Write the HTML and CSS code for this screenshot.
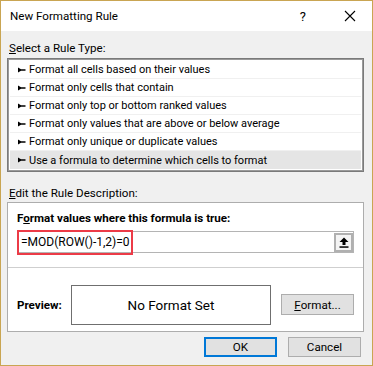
FILE: index.html
```html
<!DOCTYPE html>
<html>
<head>
<meta charset="utf-8">
<link rel="stylesheet" href="styles.css">
</head>
<body>
<div class="window">
  <div class="titlebar">
    <span class="title">New Formatting Rule</span>
    <span class="help">?</span>
    <svg class="close" width="12" height="12" viewBox="0 0 12 12"><path d="M1 1 L11 11 M11 1 L1 11" stroke="#000" stroke-width="1.1" fill="none"/></svg>
  </div>
  <div class="content">
    <div class="label label-top"><u>S</u>elect a Rule Type:</div>
    <div class="list">
      <div class="row"><svg class="arr" width="8" height="6" viewBox="0 0 8 6"><path d="M0 0.5 L3 2.3 L7.5 2.3 L7.5 3.7 L3 3.7 L0 5.5 Z" fill="#000"/></svg>Format all cells based on their values</div>
      <div class="row"><svg class="arr" width="8" height="6" viewBox="0 0 8 6"><path d="M0 0.5 L3 2.3 L7.5 2.3 L7.5 3.7 L3 3.7 L0 5.5 Z" fill="#000"/></svg>Format only cells that contain</div>
      <div class="row"><svg class="arr" width="8" height="6" viewBox="0 0 8 6"><path d="M0 0.5 L3 2.3 L7.5 2.3 L7.5 3.7 L3 3.7 L0 5.5 Z" fill="#000"/></svg>Format only top or bottom ranked values</div>
      <div class="row"><svg class="arr" width="8" height="6" viewBox="0 0 8 6"><path d="M0 0.5 L3 2.3 L7.5 2.3 L7.5 3.7 L3 3.7 L0 5.5 Z" fill="#000"/></svg>Format only values that are above or below average</div>
      <div class="row"><svg class="arr" width="8" height="6" viewBox="0 0 8 6"><path d="M0 0.5 L3 2.3 L7.5 2.3 L7.5 3.7 L3 3.7 L0 5.5 Z" fill="#000"/></svg>Format only unique or duplicate values</div>
      <div class="row selected"><svg class="arr" width="8" height="6" viewBox="0 0 8 6"><path d="M0 0.5 L3 2.3 L7.5 2.3 L7.5 3.7 L3 3.7 L0 5.5 Z" fill="#000"/></svg>Use a formula to determine which cells to format</div>
    </div>
    <div class="label label-edit"><u>E</u>dit the Rule Description:</div>
    <div class="group">
      <div class="formula-area">
        <div class="bold-label">F<u>o</u>rmat values where this formula is true:</div>
        <div class="input">
          <span class="formula">=MOD(ROW()-1,2)=0</span>
          <span class="upbtn"><svg width="10" height="11" viewBox="0 0 10 11"><path d="M5 0.5 L9.5 5 L6.5 5 L6.5 8 L3.5 8 L3.5 5 L0.5 5 Z" fill="#000"/><rect x="0.5" y="9.3" width="9" height="1.5" fill="#000"/></svg></span>
          <div class="annot"></div>
        </div>
      </div>
      <div class="preview-area">
        <div class="bold-label preview-label">Preview:</div>
        <div class="preview-box">No Format Set</div>
        <div class="btn fmt-btn"><u>F</u>ormat...</div>
      </div>
    </div>
    <div class="footer">
      <div class="btn ok">OK</div>
      <div class="btn cancel">Cancel</div>
    </div>
  </div>
</div>
</body>
</html>
```
FILE: styles.css
```css
html, body {
  margin: 0;
  padding: 0;
}
body {
  font-family: Roboto, "Noto Sans", sans-serif;
  font-size: 11.6px;
  color: #000;
  background: #f0f0f0;
}
.window {
  width: 373px;
  height: 366px;
  box-sizing: border-box;
  border: 1px solid #c9a552;
  background: #f0f0f0;
  display: flex;
  flex-direction: column;
}
.titlebar {
  height: 30px;
  background: #fff;
  display: flex;
  align-items: center;
  padding-left: 9px;
  flex-shrink: 0;
}
.title {
  flex: 1;
  font-size: 11.6px;
}
.help {
  font-size: 13px;
  margin-right: 38px;
}
.close {
  margin-right: 16px;
}
.content {
  padding: 0 8px 0 6px;
  display: flex;
  flex-direction: column;
}
.label {
  height: 16px;
  line-height: 16px;
  padding-left: 2px;
}
.label-top {
  margin-top: 9px;
  margin-bottom: 2px;
}
.list {
  border: 1px solid #7a7a7a;
  box-shadow: inset 0 0 0 1px #9a9a9a;
  background: #fff;
  padding: 2px;
  height: 114px;
  box-sizing: border-box;
}
.row {
  height: 18px;
  line-height: 17px;
  border-bottom: 1px solid #f0f0f0;
  box-sizing: border-box;
  padding-left: 8px;
  display: flex;
  align-items: center;
  font-size: 11px;
}
.row.selected {
  background: #e5e5e5;
  border-bottom: none;
}
.arr {
  margin-right: 3px;
  flex-shrink: 0;
}
.label-edit {
  margin-top: 13px;
  margin-bottom: 1px;
}
.group {
  border: 1px solid #adadad;
  background: #fff;
  height: 130px;
  box-sizing: border-box;
  display: flex;
  flex-direction: column;
}
.formula-area {
  padding: 7px 9px 0 9px;
  height: 65px;
  box-sizing: border-box;
  border-bottom: 1px solid #cfcfcf;
}
.bold-label {
  font-weight: bold;
  height: 16px;
  line-height: 16px;
}
.input {
  position: relative;
  margin-top: 5px;
  margin-left: 1px;
  height: 22px;
  border: 1px solid #b4b4b4;
  box-sizing: border-box;
  display: flex;
  align-items: center;
  justify-content: space-between;
}
.formula {
  padding-left: 2px;
  font-size: 12px;
}
.upbtn {
  width: 19px;
  height: 19px;
  margin-right: 0;
  box-sizing: border-box;
  border: 2px solid #b0b0b0;
  background: #f4f4f4;
  display: flex;
  align-items: center;
  justify-content: center;
}
.annot {
  position: absolute;
  left: -2px;
  top: -2px;
  width: 116px;
  height: 25px;
  border: 2px solid #ec3b47;
  box-sizing: border-box;
}
.preview-area {
  flex: 1;
  display: flex;
  align-items: center;
  padding: 10px 9px 0 9px;
}
.preview-label {
  width: 54px;
  flex-shrink: 0;
}
.preview-box {
  width: 200px;
  height: 40px;
  box-sizing: border-box;
  border: 1px solid #6f6f6f;
  display: flex;
  align-items: center;
  justify-content: center;
  font-size: 13.5px;
}
.btn {
  height: 21px;
  box-sizing: border-box;
  border: 1px solid #adadad;
  background: #e1e1e1;
  display: flex;
  align-items: center;
  justify-content: center;
}
.fmt-btn {
  width: 73px;
  margin-left: auto;
  margin-right: 0;
}
.footer {
  display: flex;
  justify-content: flex-end;
  gap: 11px;
  margin-top: 5px;
  padding-right: 3px;
}
.ok, .cancel {
  width: 73px;
  height: 20px;
}
.ok {
  border: 2px solid #0078d7;
}
```
